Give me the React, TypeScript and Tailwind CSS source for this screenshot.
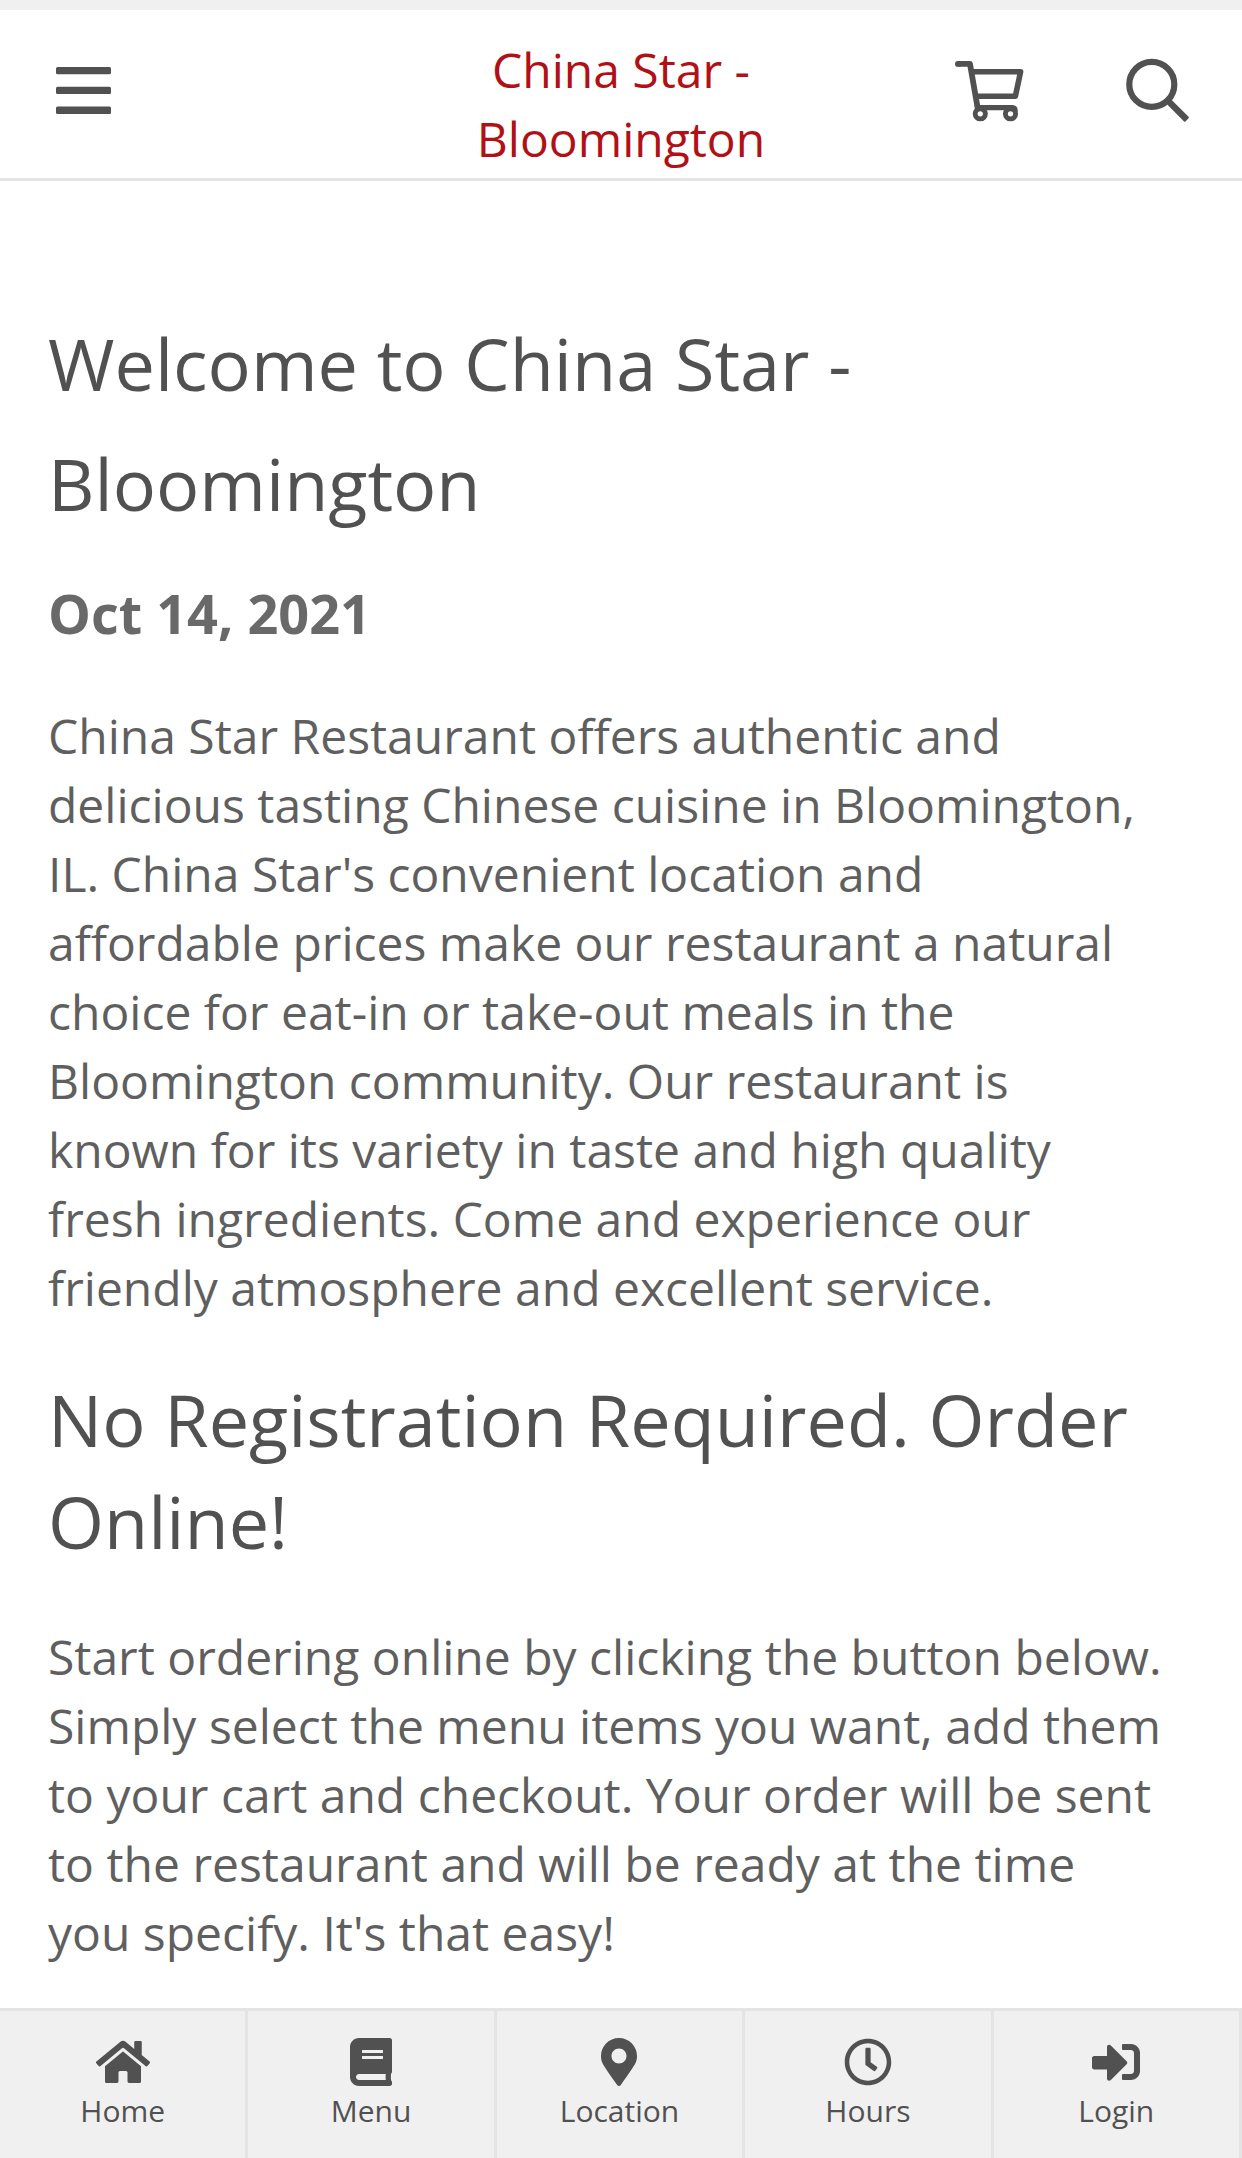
import { IconType } from 'react-icons'
import { FaBook, FaHome, FaMapMarkerAlt, FaRegClock, FaSignInAlt } from 'react-icons/fa'

interface Tab {
  label: string
  icon: IconType
  className: string
}

const tabs: Tab[] = [
  { label: 'Home', icon: FaHome, className: 'h-12 w-[54px]' },
  { label: 'Menu', icon: FaBook, className: 'h-12 w-12' },
  { label: 'Location', icon: FaMapMarkerAlt, className: 'h-12 w-12' },
  { label: 'Hours', icon: FaRegClock, className: 'h-12 w-12' },
  { label: 'Login', icon: FaSignInAlt, className: 'h-12 w-12' }
]

const MenuIcon = () => (
  <svg width="55" height="47" viewBox="0 0 55 47" fill="currentColor">
    <rect width="55" height="7.2" rx="1.5" />
    <rect y="19.8" width="55" height="7.2" rx="1.5" />
    <rect y="39.5" width="55" height="7.5" rx="1.5" />
  </svg>
)

const CartIcon = () => (
  <svg width="69" height="62" viewBox="15 20 69 62" fill="none" stroke="currentColor" strokeLinejoin="round">
    <path d="M18 23.9H30l7.8 44.8" strokeWidth="5.8" />
    <path d="M17.9 23.9h1" strokeWidth="5.8" strokeLinecap="round" />
    <path d="M32 31.7H80.6L75.4 56.2H36" strokeWidth="5.6" />
    <path d="M38 67.6h34.5q2.8 0 2.8 4" strokeWidth="5.3" />
    <circle cx="40.3" cy="73.8" r="5.1" strokeWidth="4.9" />
    <circle cx="70.5" cy="73.8" r="5.1" strokeWidth="4.9" />
  </svg>
)

const SearchIcon = () => (
  <svg width="65" height="66" viewBox="15 17 65 66" fill="none" stroke="currentColor">
    <circle cx="41.8" cy="44.4" r="22.5" strokeWidth="6.2" />
    <rect x="0" y="-3.2" width="25.5" height="6.4" rx="1" fill="currentColor" stroke="none" transform="translate(59 61.8) rotate(45)" />
  </svg>
)

const App: React.FC = () => {
  return (
    <div className="flex h-[2158px] w-[1242px] flex-col overflow-hidden bg-white font-['Open_Sans',sans-serif] text-[#5f5f5f]">
      <header className="grid h-[181px] shrink-0 grid-cols-[1fr_auto_1fr] border-t-[10px] border-b-3 border-t-[#f0f0f0] border-b-[#e4e4e4] text-[#515151]">
        <div className="pt-[57px] pl-14">
          <MenuIcon />
        </div>
        <h2 className="pt-[25px] text-center text-[48px] leading-[69px] text-[#b11116]">
          China Star -<br />
          Bloomington
        </h2>
        <div className="flex items-start justify-end gap-[101px] pt-[47px] pr-[52px]">
          <div className="pt-[3px]">
            <CartIcon />
          </div>
          <SearchIcon />
        </div>
      </header>

      <main className="flex-1 px-12 pt-[122px] text-[48px] leading-[69px]">
        <h1 className="text-[72px] leading-[120px] text-[#515151]">
          Welcome to China Star -<br />
          Bloomington
        </h1>
        <p className="mt-9 text-[54px] leading-[69px] font-bold text-[#696969]">Oct 14, 2021</p>
        <p className="mt-[53px]">
          China Star Restaurant offers authentic and<br />
          delicious tasting Chinese cuisine in Bloomington,<br />
          IL. China Star's convenient location and<br />
          affordable prices make our restaurant a natural<br />
          choice for eat-in or take-out meals in the<br />
          Bloomington community. Our restaurant is<br />
          known for its variety in taste and high quality<br />
          fresh ingredients. Come and experience our<br />
          friendly atmosphere and excellent service.
        </p>
        <h2 className="mt-[46px] text-[72px] leading-[102px] text-[#515151]">
          No Registration Required. Order<br />
          Online!
        </h2>
        <p className="mt-[50px]">
          Start ordering online by clicking the button below.<br />
          Simply select the menu items you want, add them<br />
          to your cart and checkout. Your order will be sent<br />
          to the restaurant and will be ready at the time<br />
          you specify. It's that easy!
        </p>
      </main>

      <nav className="grid h-[150px] shrink-0 grid-cols-5 border-t-3 border-[#e4e4e4] bg-[#f0f0f0] text-[#515151]">
        {tabs.map(({ label, icon: Icon, className }) => (
          <div
            key={label}
            className="flex flex-col items-center gap-0.5 border-r-3 border-[#e4e4e4] pt-[27px] text-[30px] leading-[45px]"
          >
            <Icon className={className} />
            {label}
          </div>
        ))}
      </nav>
    </div>
  )
}

export default App
